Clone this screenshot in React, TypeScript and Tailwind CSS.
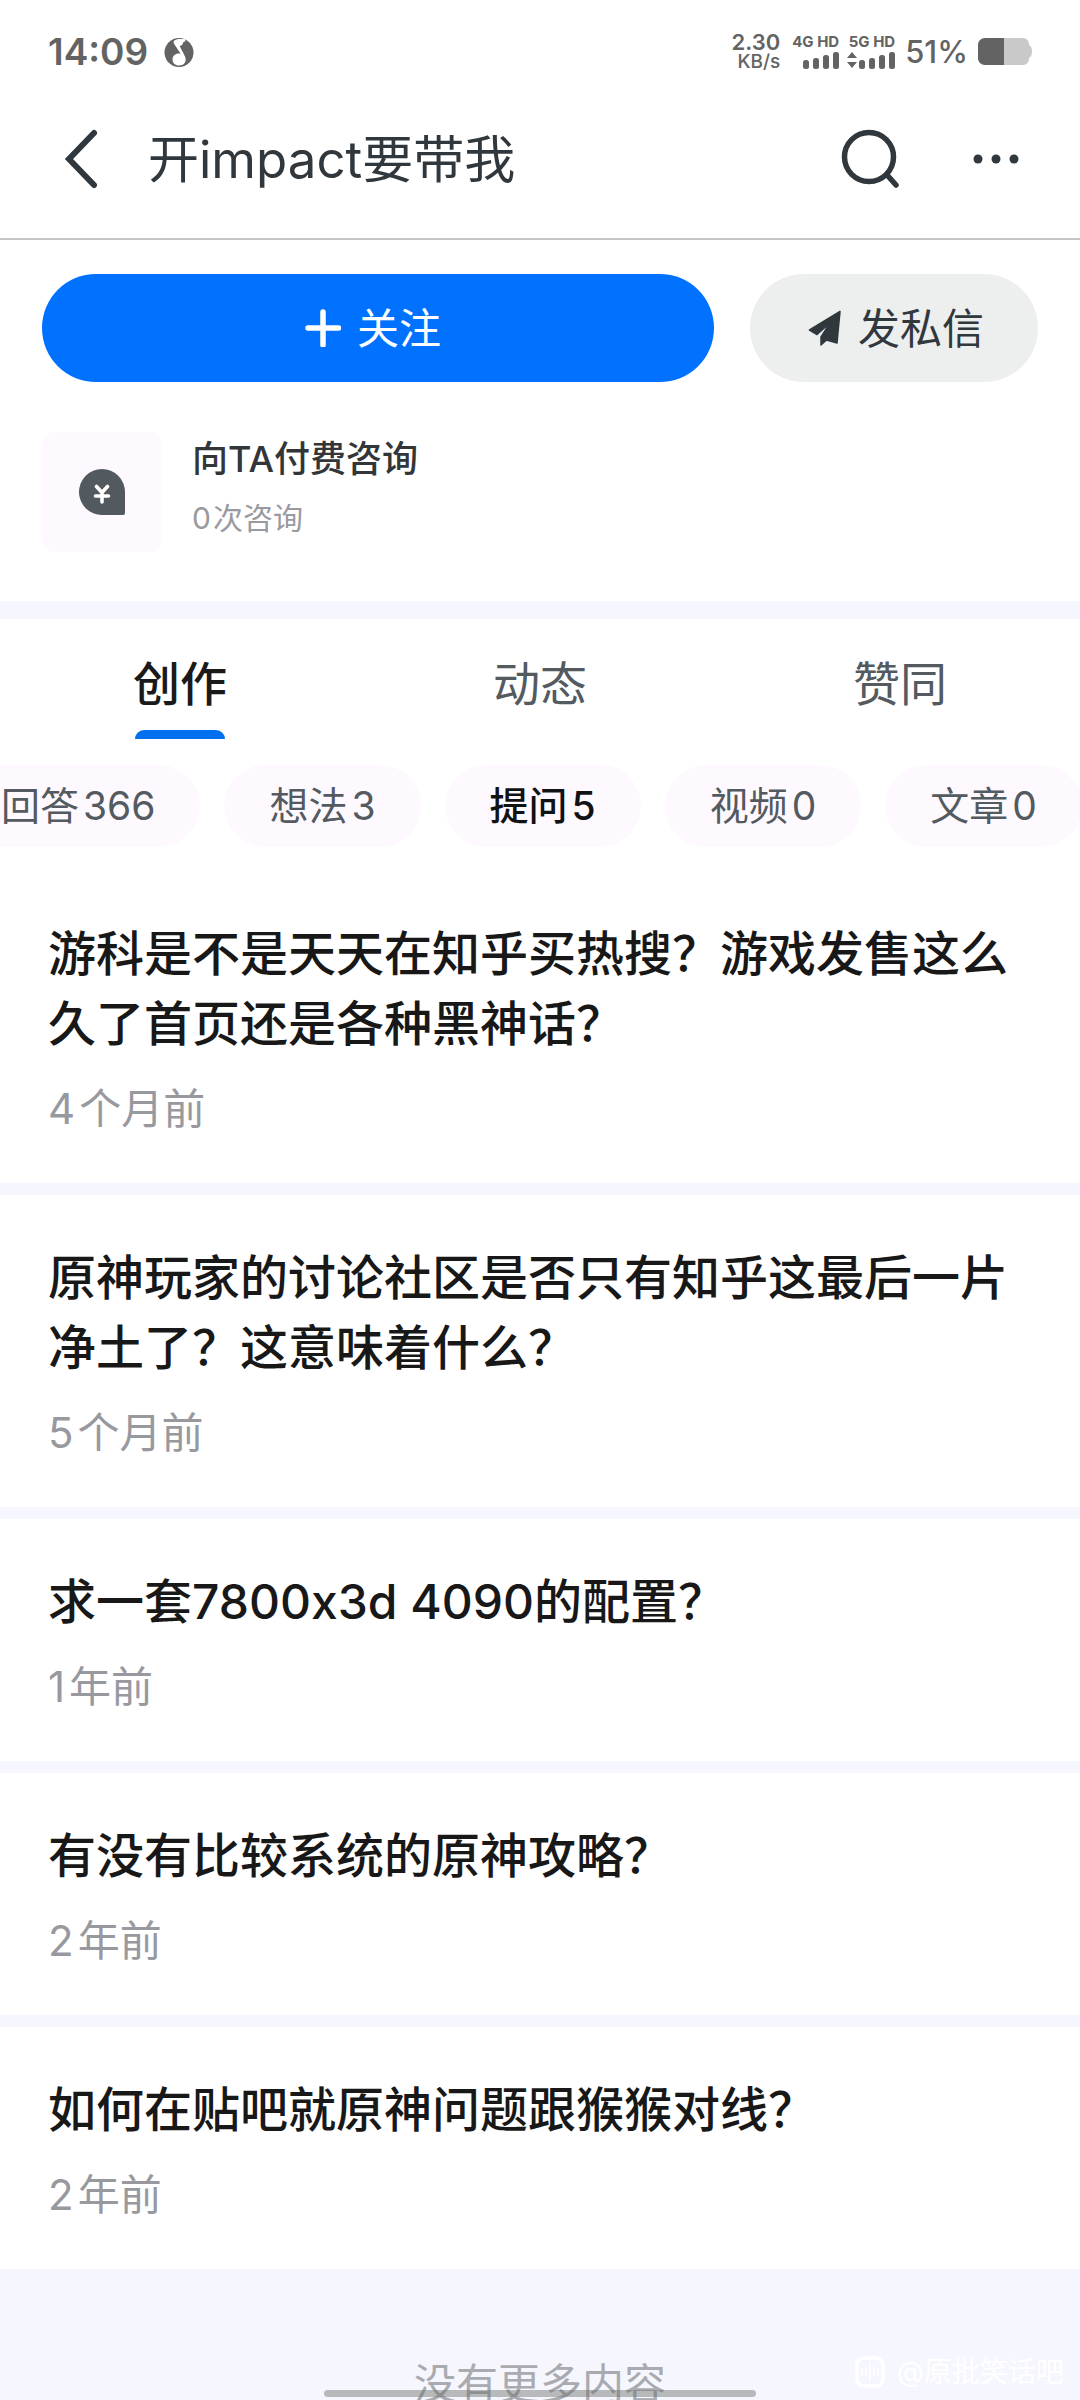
import React, { useState } from 'react';

interface Filter {
  id: string;
  label: string;
  count: number;
}

interface Question {
  id: number;
  title: string;
  age: string;
  unit: string;
}

const TABS = ['创作', '动态', '赞同'];

const FILTERS: Filter[] = [
  { id: 'answers', label: '回答', count: 366 },
  { id: 'ideas', label: '想法', count: 3 },
  { id: 'questions', label: '提问', count: 5 },
  { id: 'videos', label: '视频', count: 0 },
  { id: 'articles', label: '文章', count: 0 },
];

const QUESTIONS: Question[] = [
  { id: 1, title: '游科是不是天天在知乎买热搜？游戏发售这么久了首页还是各种黑神话？', age: '4', unit: '个月前' },
  { id: 2, title: '原神玩家的讨论社区是否只有知乎这最后一片净土了？这意味着什么？', age: '5', unit: '个月前' },
  { id: 3, title: '求一套7800x3d 4090的配置？', age: '1', unit: '年前' },
  { id: 4, title: '有没有比较系统的原神攻略？', age: '2', unit: '年前' },
  { id: 5, title: '如何在贴吧就原神问题跟猴猴对线？', age: '2', unit: '年前' },
];

const SignalBars = () => (
  <svg width="36" height="17" viewBox="0 0 36 17" fill="currentColor" aria-hidden="true">
    <rect x="0" y="8" width="6" height="9" rx="2.5" />
    <rect x="10" y="6" width="6" height="11" rx="2.5" />
    <rect x="20" y="3" width="6" height="14" rx="2.5" />
    <rect x="30" y="0" width="6" height="17" rx="2.5" />
  </svg>
);

const StatusBar = () => (
  <div className="flex h-20 shrink-0 items-center justify-between px-12 pt-6 text-[#636363]">
    <div className="flex items-center gap-4">
      <span className="text-[37px] leading-10 font-semibold">14:09</span>
      <svg width="30" height="30" viewBox="0 0 30 30" aria-hidden="true">
        <circle cx="15" cy="15.500" r="14.500" fill="#636363" />
        <path
          d="M20.500 0.500l-1.500 1.800c-3-.8-6-.3-8.300 1-1.700 1.200-1.300 2.700-.2 4.200l6.200 9.300c-4.300-1-8.200 1.500-8.200 5.700 0 3.500 2.700 6 6.500 6 4.500 0 7.300-2.800 6.600-7-.6-3.600-4.200-8-5.800-12.500 1.800-.3 3.200-1.500 3.200-3.500l2.500-1.500z"
          fill="#fff"
        />
      </svg>
    </div>
    <div className="flex items-center">
      <div className="flex flex-col items-end">
        <span className="text-[22px] leading-5 font-semibold">2.30</span>
        <span className="text-[19px] leading-5 font-medium">KB/s</span>
      </div>
      <div className="ml-3 flex flex-col items-end gap-1">
        <span className="text-[15px] leading-3 font-bold">4G HD</span>
        <SignalBars />
      </div>
      <div className="ml-2 flex flex-col items-end gap-1">
        <span className="text-[15px] leading-3 font-bold">5G HD</span>
        <div className="flex items-center gap-0.5">
          <svg width="10" height="16" viewBox="0 0 10 16" fill="currentColor" aria-hidden="true">
            <path d="M5 0l5 6H0zM5 16l5-6H0z" />
          </svg>
          <SignalBars />
        </div>
      </div>
      <span className="ml-2.5 text-[31px] leading-10 font-medium">51%</span>
      <svg className="ml-2.5" width="54" height="28" viewBox="0 0 54 28" aria-hidden="true">
        <path d="M26 0h19c4 0 6 3 6 7 2 1 3 3 3 6.500s-1 5.500-3 6.500c0 4-2 7-6 7H26z" fill="#c9c9c9" />
        <path d="M7 0h19v27H7c-4 0-7-3-7-7V7c0-4 3-7 7-7z" fill="#636363" />
      </svg>
    </div>
  </div>
);

const Header: React.FC<{ title: string }> = ({ title }) => (
  <header className="flex h-40 shrink-0 items-center border-b-2 border-[#c6c6c6] px-14 text-[#30383e]">
    <button type="button" aria-label="返回" className="pl-2">
      <svg width="36" height="60" viewBox="0 0 36 60" fill="none" stroke="currentColor" strokeWidth="6" strokeLinecap="round" strokeLinejoin="miter">
        <path d="M30 4L5 30l25 26" />
      </svg>
    </button>
    <h1 className="ml-12 flex-1 pt-0.5 text-[51px] leading-[60px] font-normal">{title}</h1>
    <button type="button" aria-label="搜索">
      <svg width="60" height="60" viewBox="0 0 60 60" fill="none" stroke="currentColor" strokeWidth="5.500" strokeLinecap="round">
        <circle cx="29" cy="28" r="24.500" />
        <path d="M48 47l8 9" />
      </svg>
    </button>
    <button type="button" aria-label="更多" className="ml-[70px]">
      <svg width="54" height="60" viewBox="0 0 54 60" fill="currentColor">
        <circle cx="8" cy="30" r="4.500" />
        <circle cx="26" cy="30" r="4.500" />
        <circle cx="44" cy="30" r="4.500" />
      </svg>
    </button>
  </header>
);

const ProfileActions = () => {
  const [following, setFollowing] = useState(false);

  return (
    <div className="flex gap-9 px-[42px] pt-[34px]">
      <button
        type="button"
        aria-pressed={following}
        onClick={() => setFollowing(!following)}
        className="flex h-[108px] flex-1 items-center justify-center gap-4 rounded-full bg-[#0072ff] pr-2.5 text-[42px] text-white"
      >
        <svg width="36" height="38" viewBox="0 0 36 38" fill="none" stroke="currentColor" strokeWidth="5.500" strokeLinecap="round" aria-hidden="true">
          <path d="M3 19h30.500M18 3v33" />
        </svg>
        关注
      </button>
      <button
        type="button"
        className="flex h-[108px] w-72 items-center justify-center gap-4 rounded-full bg-[#edeeee] pl-1 text-[42px] text-[#30383e]"
      >
        <svg width="34" height="36" viewBox="0 0 34 36" fill="currentColor" stroke="currentColor" strokeWidth="1.500" strokeLinejoin="round" aria-hidden="true">
          <path d="M32 1.500L1.500 20l7.500 4.500L22 13l-9 14v8l5.500-5 10.500 3z" />
        </svg>
        发私信
      </button>
    </div>
  );
};

const Consult = () => (
  <a href="#consult" className="mt-[50px] flex gap-[30px] px-[42px] pb-[49px]">
    <span className="flex size-[120px] items-center justify-center rounded-xl bg-[#fdf9ff]">
      <svg width="46" height="46" viewBox="0 0 46 46" aria-hidden="true">
        <path d="M23 0a23 23 0 0 1 23 23v21a2 2 0 0 1-2 2H23a23 23 0 0 1 0-46z" fill="#52595f" />
        <path d="M17.500 17.500l5.500 6 5.500-6M16.500 27h13M23 24v9" fill="none" stroke="#fff" strokeWidth="3.600" strokeLinecap="round" />
      </svg>
    </span>
    <span className="flex flex-col">
      <span className="text-[36px] leading-[54px] font-medium text-[#333639]">向TA付费咨询</span>
      <span className="flex gap-0.5 text-[30px] leading-[64px] text-[#999aa0]">
        <span>0</span>
        <span>次咨询</span>
      </span>
    </span>
  </a>
);

const TabBar: React.FC<{ active: string; onChange: (tab: string) => void }> = ({ active, onChange }) => (
  <div role="tablist" className="grid grid-cols-3">
    {TABS.map(tab => (
      <button
        key={tab}
        type="button"
        role="tab"
        aria-selected={tab === active}
        onClick={() => onChange(tab)}
        className={`flex h-[120px] flex-col items-center justify-between pt-[30px] text-[47px] leading-[70px] ${
          tab === active ? 'font-medium text-[#1a1a1a]' : 'text-[#535a60]'
        }`}
      >
        {tab}
        {tab === active && <span className="h-[9px] w-[90px] rounded-t-full bg-[#0070f0]" />}
      </button>
    ))}
  </div>
);

const FilterChips: React.FC<{ active: string; onChange: (id: string) => void }> = ({ active, onChange }) => (
  <div className="overflow-hidden pt-[26px] pb-6">
    <div className="-ml-11 flex gap-6">
      {FILTERS.map(filter => (
        <button
          key={filter.id}
          type="button"
          onClick={() => onChange(filter.id)}
          className={`flex h-[82px] shrink-0 items-center gap-1 rounded-full bg-[#fdf9ff] px-[45px] text-[39px] ${
            filter.id === active ? 'font-medium text-[#111214]' : 'text-[#535a60]'
          }`}
        >
          <span>{filter.label}</span>
          <span>{filter.count}</span>
        </button>
      ))}
    </div>
  </div>
);

const QuestionItem: React.FC<{ question: Question }> = ({ question }) => (
  <li className="bg-white px-12 pt-12 pb-[49px]">
    <a href={`#question-${question.id}`} className="block">
      <h2 className="text-[48px] leading-[70px] font-medium text-[#181818]">{question.title}</h2>
      <p className="mt-[25px] flex gap-1 text-[42px] leading-[50px] text-[#98999f]">
        <span>{question.age}</span>
        <span>{question.unit}</span>
      </p>
    </a>
  </li>
);

const Watermark = () => (
  <div className="absolute right-4 bottom-2 flex items-center gap-3 text-[28px] leading-10 text-white">
    <svg width="30" height="32" viewBox="0 0 30 32" fill="none" stroke="currentColor" strokeWidth="3.500" aria-hidden="true">
      <rect x="2" y="2" width="26" height="28" rx="7" />
      <path d="M7 13v7M11 11v9M15 7v18M19 11v9M23 13v7" strokeWidth="1.500" />
    </svg>
    @原批笑话吧
  </div>
);

export default function App() {
  const [tab, setTab] = useState('创作');
  const [filter, setFilter] = useState('questions');

  return (
    <div className="relative flex h-screen flex-col overflow-hidden bg-white font-['Inter','Noto_Sans_CJK_SC',sans-serif]">
      <StatusBar />
      <Header title="开impact要带我" />
      <main className="min-h-0 flex-1 overflow-y-auto bg-[#f6f7fe] [scrollbar-width:none]">
        <section className="bg-white">
          <ProfileActions />
          <Consult />
        </section>
        <section className="mt-[18px] bg-white">
          <TabBar active={tab} onChange={setTab} />
          <FilterChips active={filter} onChange={setFilter} />
        </section>
        <ul className="flex flex-col gap-3">
          {QUESTIONS.map(question => (
            <QuestionItem key={question.id} question={question} />
          ))}
        </ul>
        <p className="pt-[85px] pb-10 text-center text-[42px] leading-[60px] text-[#a9abb0]">没有更多内容</p>
      </main>
      <div className="absolute inset-x-0 bottom-[3px] mx-auto h-[7px] w-2/5 rounded-full bg-[#6b6e6b]/45" />
      <Watermark />
    </div>
  );
}
